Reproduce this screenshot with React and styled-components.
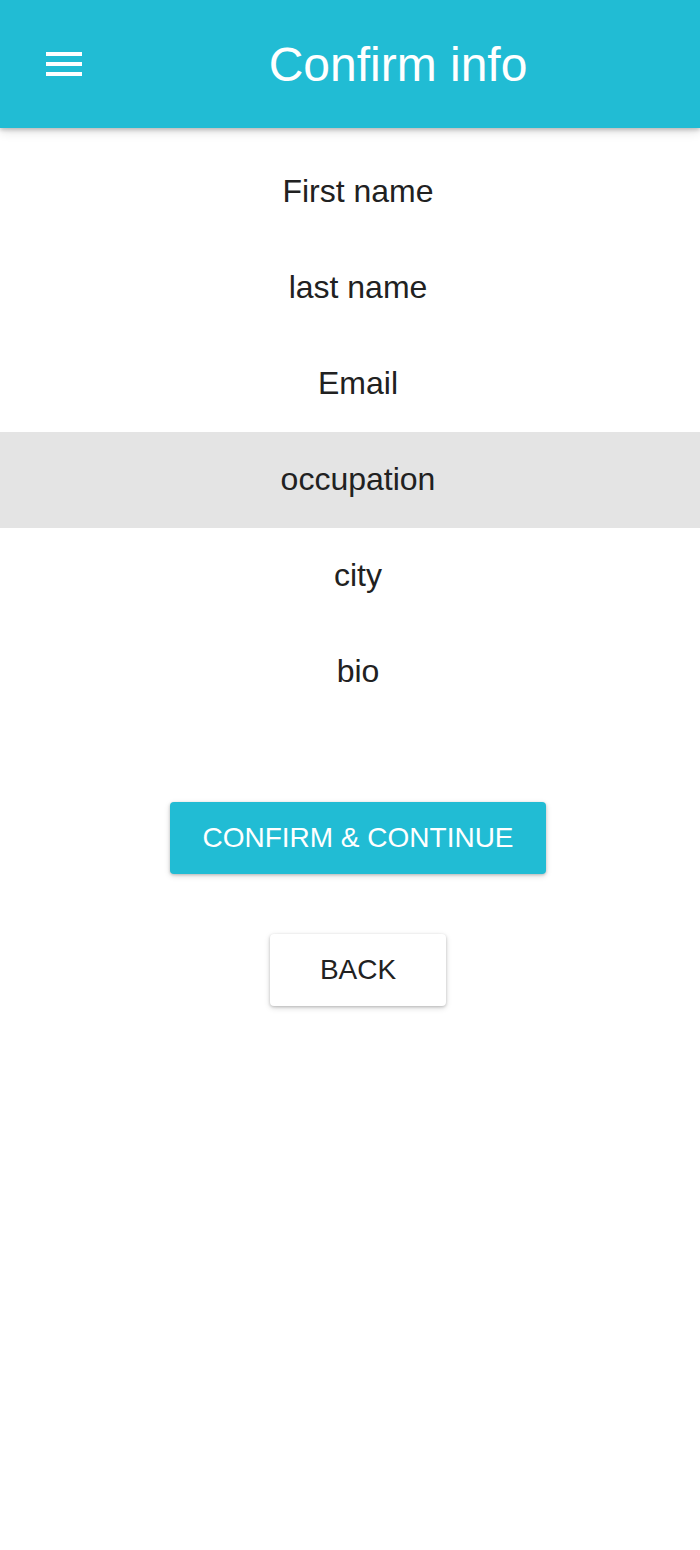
import React from 'react';
import styled, { createGlobalStyle } from 'styled-components';

const GlobalStyle = createGlobalStyle`
  body {
    margin: 0;
    background: #ffffff;
    font-family: "Liberation Sans", Arial, sans-serif;
  }
`;

const Page = styled.div`
  min-height: 1550px;
  background: #ffffff;
`;

const Header = styled.header`
  display: flex;
  align-items: center;
  height: 128px;
  background-color: #21bcd4;
  box-shadow: 0 2px 4px rgba(0, 0, 0, 0.2), 0 4px 10px rgba(0, 0, 0, 0.12);
  position: relative;
  z-index: 1;
`;

const MenuButton = styled.button`
  display: flex;
  align-items: center;
  width: 96px;
  height: 100%;
  padding: 0 0 0 46px;
  border: none;
  background: transparent;
  cursor: pointer;
`;

const Title = styled.h1`
  flex: 1;
  margin: 0;
  text-align: center;
  color: #ffffff;
  font-size: 48px;
  font-weight: 400;
`;

const List = styled.ul`
  list-style: none;
  margin: 0;
  padding: 16px 0 0;
`;

const ListItem = styled.li`
  display: flex;
  align-items: center;
  justify-content: center;
  height: 96px;
  padding: 0 0 2px 16px;
  box-sizing: border-box;
  font-size: 32px;
  color: #212121;
  background-color: ${(p) => (p.$active ? '#e4e4e4' : 'transparent')};
`;

const Actions = styled.div`
  display: flex;
  flex-direction: column;
  align-items: center;
  gap: 60px;
  margin-top: 82px;
  padding-left: 16px;
`;

const Button = styled.button`
  height: 72px;
  min-width: 176px;
  padding: 0 32px;
  border: none;
  border-radius: 4px;
  font-family: "Liberation Sans", Arial, sans-serif;
  font-size: 28px;
  text-transform: uppercase;
  color: ${(p) => (p.$primary ? '#ffffff' : '#212121')};
  background-color: ${(p) => (p.$primary ? '#21bcd4' : '#ffffff')};
  box-shadow: 0 1px 3px rgba(0, 0, 0, 0.2), 0 2px 6px rgba(0, 0, 0, 0.14);
  cursor: pointer;
`;

function MenuIcon() {
  return (
    <svg width="36" height="24" viewBox="0 0 36 24">
      <rect x="0" y="0" width="36" height="4" fill="#fff" />
      <rect x="0" y="10" width="36" height="4" fill="#fff" />
      <rect x="0" y="20" width="36" height="4" fill="#fff" />
    </svg>
  );
}

const fields = ['First name', 'last name', 'Email', 'occupation', 'city', 'bio'];

export default function App() {
  return (
    <>
      <GlobalStyle />
      <Page>
        <Header>
          <MenuButton aria-label="menu">
            <MenuIcon />
          </MenuButton>
          <Title>Confirm info</Title>
        </Header>
        <List>
          {fields.map((f) => (
            <ListItem key={f} $active={f === 'occupation'}>
              {f}
            </ListItem>
          ))}
        </List>
        <Actions>
          <Button $primary>Confirm &amp; Continue</Button>
          <Button>Back</Button>
        </Actions>
      </Page>
    </>
  );
}
